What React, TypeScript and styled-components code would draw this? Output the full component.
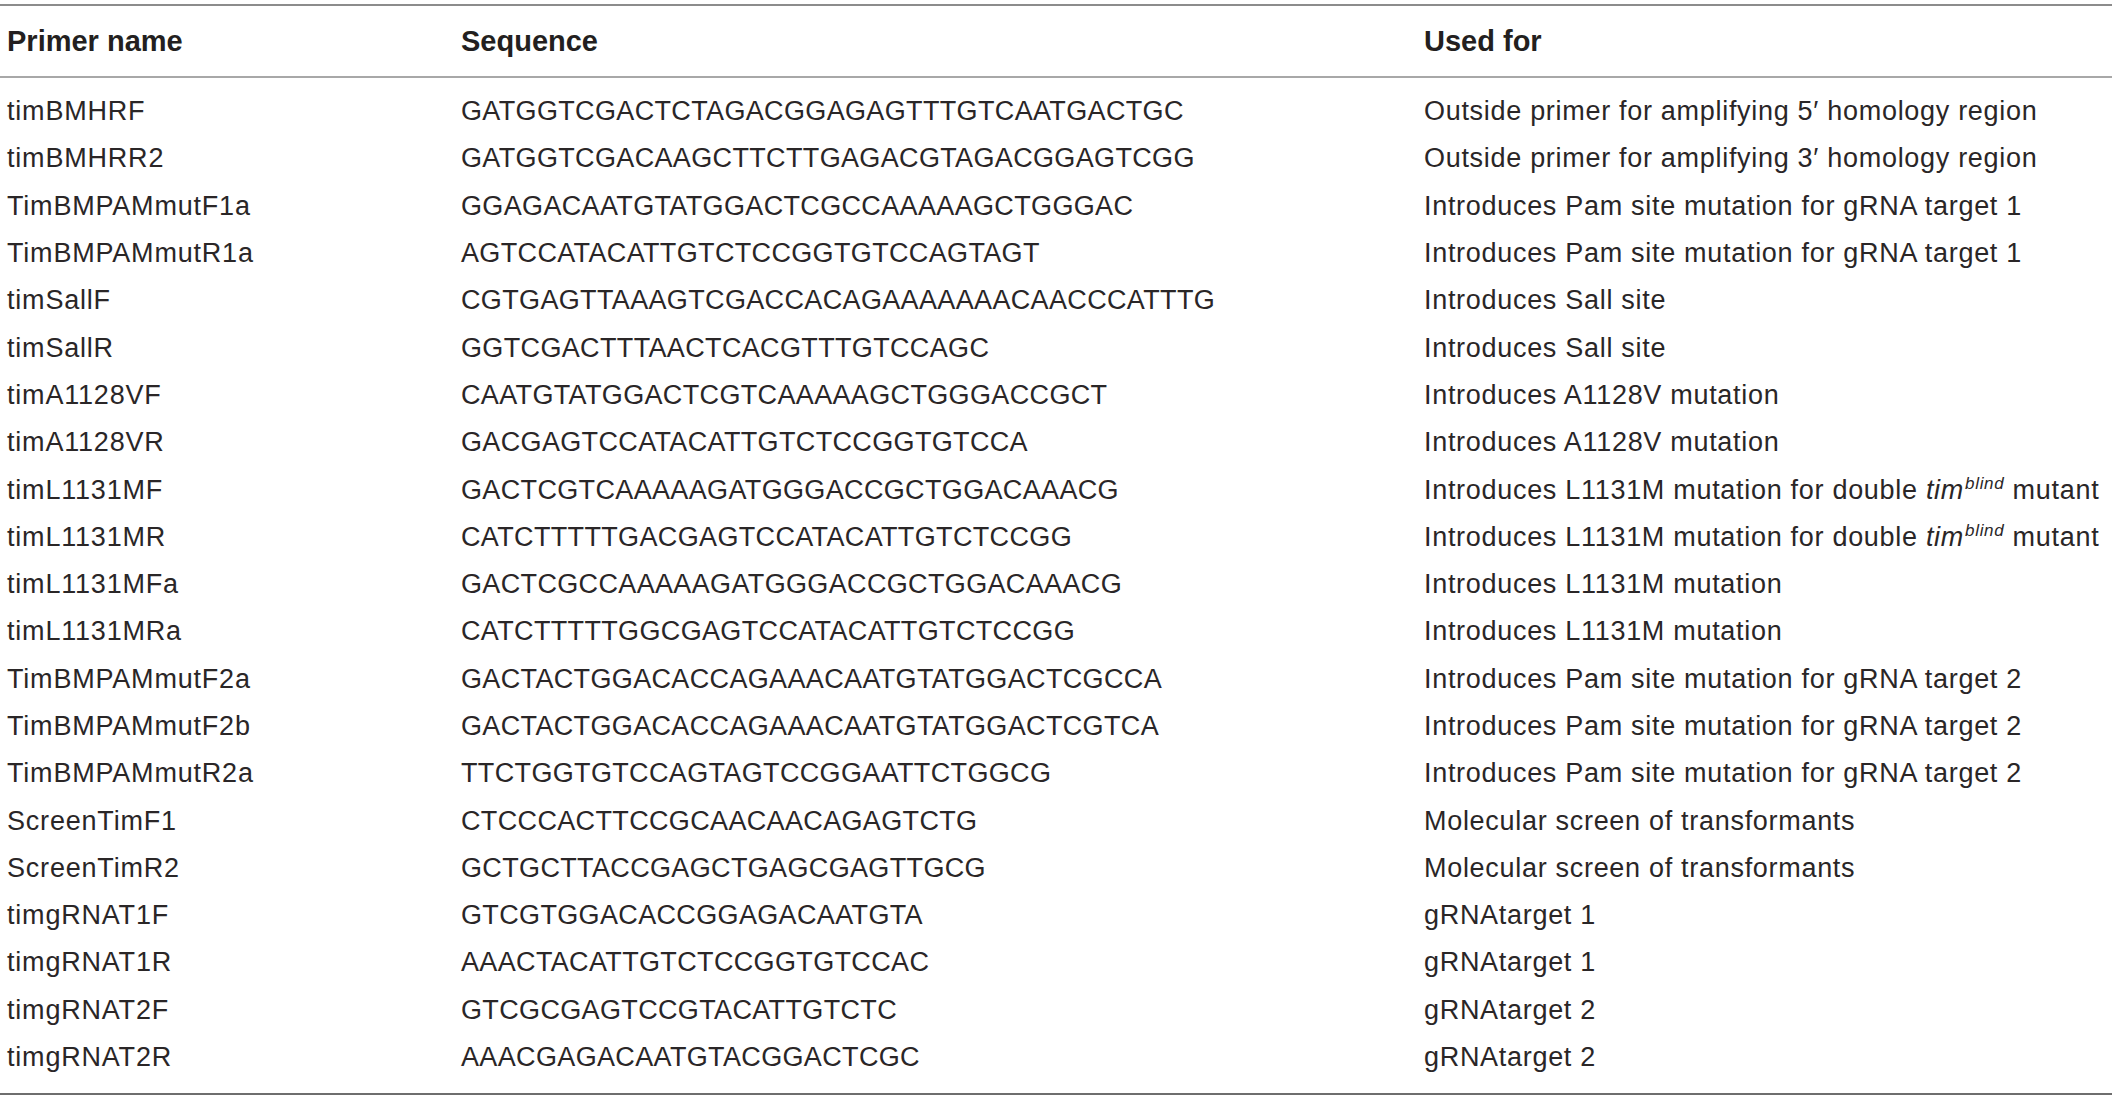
import React from 'react'
import styled, { createGlobalStyle } from 'styled-components'

type Row = [string, string, React.ReactNode]

const Tim = () => (
  <>
    <i>tim</i>
    <Sup>blind</Sup>
  </>
)

const rows: Row[] = [
  ['timBMHRF', 'GATGGTCGACTCTAGACGGAGAGTTTGTCAATGACTGC', 'Outside primer for amplifying 5\u2032 homology region'],
  ['timBMHRR2', 'GATGGTCGACAAGCTTCTTGAGACGTAGACGGAGTCGG', 'Outside primer for amplifying 3\u2032 homology region'],
  ['TimBMPAMmutF1a', 'GGAGACAATGTATGGACTCGCCAAAAAGCTGGGAC', 'Introduces Pam site mutation for gRNA target 1'],
  ['TimBMPAMmutR1a', 'AGTCCATACATTGTCTCCGGTGTCCAGTAGT', 'Introduces Pam site mutation for gRNA target 1'],
  ['timSallF', 'CGTGAGTTAAAGTCGACCACAGAAAAAAACAACCCATTTG', 'Introduces Sall site'],
  ['timSallR', 'GGTCGACTTTAACTCACGTTTGTCCAGC', 'Introduces Sall site'],
  ['timA1128VF', 'CAATGTATGGACTCGTCAAAAAGCTGGGACCGCT', 'Introduces A1128V mutation'],
  ['timA1128VR', 'GACGAGTCCATACATTGTCTCCGGTGTCCA', 'Introduces A1128V mutation'],
  ['timL1131MF', 'GACTCGTCAAAAAGATGGGACCGCTGGACAAACG', <>Introduces L1131M mutation for double <Tim /> mutant</>],
  ['timL1131MR', 'CATCTTTTTGACGAGTCCATACATTGTCTCCGG', <>Introduces L1131M mutation for double <Tim /> mutant</>],
  ['timL1131MFa', 'GACTCGCCAAAAAGATGGGACCGCTGGACAAACG', 'Introduces L1131M mutation'],
  ['timL1131MRa', 'CATCTTTTTGGCGAGTCCATACATTGTCTCCGG', 'Introduces L1131M mutation'],
  ['TimBMPAMmutF2a', 'GACTACTGGACACCAGAAACAATGTATGGACTCGCCA', 'Introduces Pam site mutation for gRNA target 2'],
  ['TimBMPAMmutF2b', 'GACTACTGGACACCAGAAACAATGTATGGACTCGTCA', 'Introduces Pam site mutation for gRNA target 2'],
  ['TimBMPAMmutR2a', 'TTCTGGTGTCCAGTAGTCCGGAATTCTGGCG', 'Introduces Pam site mutation for gRNA target 2'],
  ['ScreenTimF1', 'CTCCCACTTCCGCAACAACAGAGTCTG', 'Molecular screen of transformants'],
  ['ScreenTimR2', 'GCTGCTTACCGAGCTGAGCGAGTTGCG', 'Molecular screen of transformants'],
  ['timgRNAT1F', 'GTCGTGGACACCGGAGACAATGTA', 'gRNAtarget 1'],
  ['timgRNAT1R', 'AAACTACATTGTCTCCGGTGTCCAC', 'gRNAtarget 1'],
  ['timgRNAT2F', 'GTCGCGAGTCCGTACATTGTCTC', 'gRNAtarget 2'],
  ['timgRNAT2R', 'AAACGAGACAATGTACGGACTCGC', 'gRNAtarget 2'],
]

const App = () => (
  <>
    <GlobalStyle />
    <Table>
      <Header>
        <HeadCell>Primer name</HeadCell>
        <HeadCell>Sequence</HeadCell>
        <HeadCell>Used for</HeadCell>
      </Header>
      <Body>
        {rows.map(([name, seq, use], i) => (
          <BodyRow key={i}>
            <Cell $spacing={0.8}>{name}</Cell>
            <Cell $spacing={0.35}>{seq}</Cell>
            <Cell $spacing={0.7}>{use}</Cell>
          </BodyRow>
        ))}
      </Body>
    </Table>
  </>
)

export default App

const GlobalStyle = createGlobalStyle`
  body {
    margin: 0;
    background: #ffffff;
    font-family: 'Liberation Sans', Arial, sans-serif;
    color: #231f20;
  }
`

const Table = styled.div`
  width: 2112px;
  margin-top: 4px;
  border-top: 2px solid #8c8c8c;
  border-bottom: 2px solid #6e6e6e;
`

const rowGrid = `
  display: grid;
  grid-template-columns: 454px 963px 1fr;
  padding-left: 7px;
  align-items: center;
  white-space: nowrap;
`

const Header = styled.div`
  ${rowGrid}
  height: 70px;
  border-bottom: 2px solid #a8a8a8;
`

const HeadCell = styled.div`
  font-size: 29px;
  font-weight: 700;
  letter-spacing: 0;
  color: #231f20;
`

const Body = styled.div`
  padding: 10px 0 12px;
`

const BodyRow = styled.div`
  ${rowGrid}
  height: 47.3px;
`

const Cell = styled.div<{ $spacing: number }>`
  font-size: 27px;
  font-weight: 400;
  letter-spacing: ${(p) => p.$spacing}px;
  color: #2a2627;
`

const Sup = styled.sup`
  font-size: 17px;
  font-style: italic;
  vertical-align: 10px;
  line-height: 0;
  margin-left: 1px;
`
